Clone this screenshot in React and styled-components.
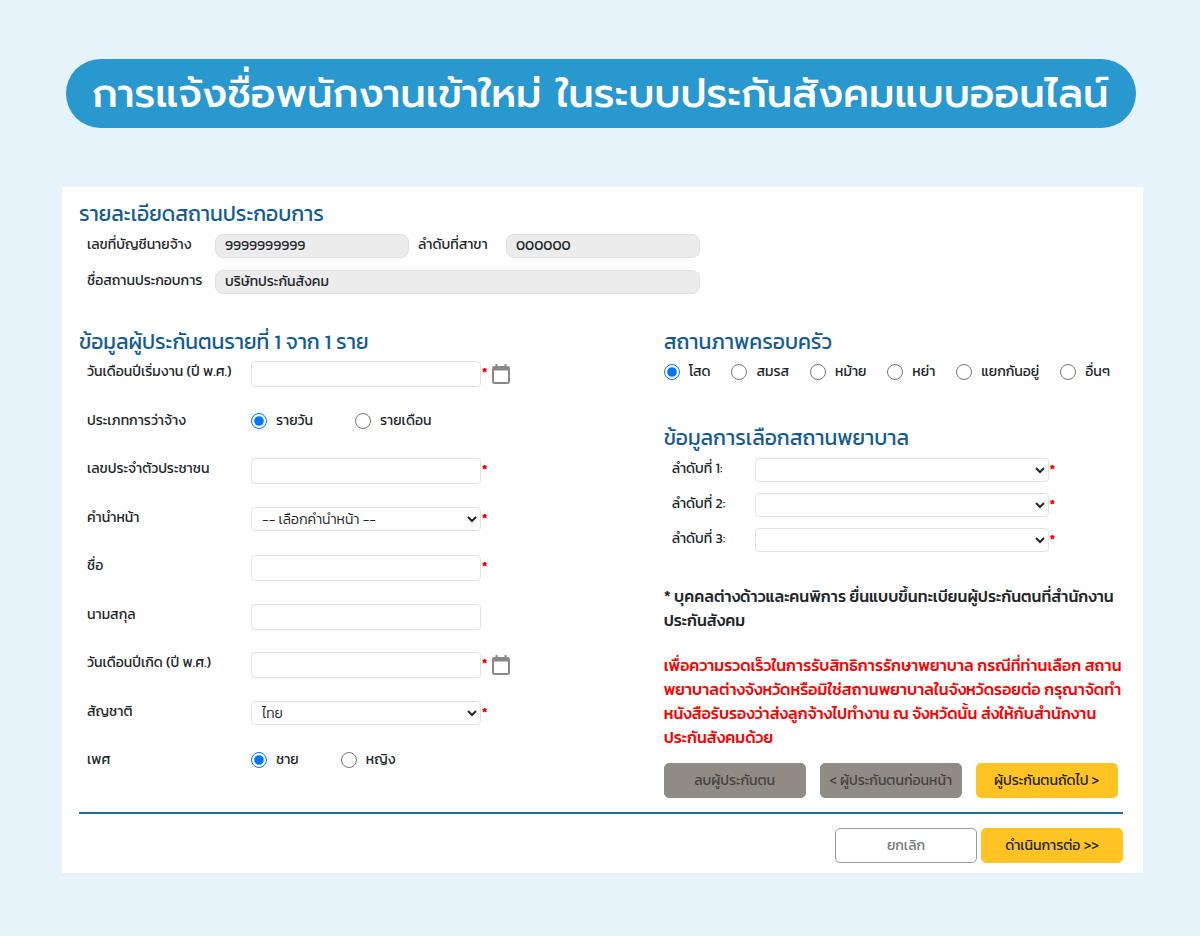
import { useState } from "react";
import styled, { createGlobalStyle } from "styled-components";

const GlobalStyle = createGlobalStyle`
* {
    box-sizing: border-box;
}
body {
    margin: 0;
    background: #e7f3fa;
    color: #212529;
    font-family: Kanit, Prompt, "Noto Sans Thai", "Noto Sans", sans-serif;
    font-size: 14px;
}
input, select, button {
    font: inherit;
    color: inherit;
}
`
const Page = styled.div`
padding: 59px 57px 63px 62px;
`
const Banner = styled.h1`
margin: 0 7px 59px 4px;
padding: 4px 26px 4px 24px;
border-radius: 35px;
background: #2998ce;
color: white;
font-family: Prompt, Kanit, "Noto Sans Thai", sans-serif;
font-size: 40px;
line-height: 61px;
font-weight: 500;
text-align: center;
white-space: nowrap;
`
const Card = styled.form`
padding: 12px 20px 10px 17px;
background: white;
`
const Title = styled.h2`
margin: 0;
color: #125a96;
font-size: 21px;
line-height: 30px;
font-weight: 400;
`
const Company = styled.section`
display: grid;
grid-template-columns: 119px 1fr 79px 1fr;
gap: 12px 9px;
align-items: start;
max-width: 621px;
padding: 5px 0 33px 8px;
`
const Label = styled.label`
line-height: 22px;
font-weight: 400;
white-space: nowrap;
`
const ReadOnly = styled.input`
width: 100%;
height: 24px;
padding: 0 9px 2px;
border: 1px solid #dfdfdf;
border-radius: 8px;
background: #ececec;
font-weight: 400;

&.wide {
    grid-column: 2 / -1;
}
`
const Columns = styled.div`
display: grid;
grid-template-columns: 56fr 44fr;
`
const Column = styled.section`
display: flex;
flex-direction: column;
`
const Fields = styled.div`
flex: 1;
display: flex;
flex-direction: column;
justify-content: space-between;
padding: 4px 0 23px 8px;
`
const Field = styled.div`
display: flex;
align-items: flex-start;
height: 26px;

& > :first-child {
    width: 164px;
}
`
const TextInput = styled.input`
width: 230px;
height: 26px;
padding: 0 8px;
border: 1px solid #e2e2e2;
border-radius: 4px;
background: white;
`
const Select = styled.select`
width: ${props => props.$wide ? "294px" : "230px"};
height: 24px;
padding: 0 6px;
border: 1px solid #e2e2e2;
border-radius: 4px;
background: white;
font-weight: 300;
`
const Star = styled.span`
padding: 0 1px;
color: red;
font-size: 12px;
line-height: 22px;
font-weight: 700;
`
const IconButton = styled.button`
display: flex;
padding: 3px 0;
margin-left: 4px;
border: 0;
background: none;
color: #888;
`
const Radios = styled.div`
display: flex;
align-items: center;
gap: ${props => props.$gap};
`
const RadioLabel = styled.label`
display: flex;
align-items: center;
gap: 9px;
line-height: 22px;
font-weight: 400;
white-space: nowrap;

input {
    width: 16px;
    height: 16px;
    margin: 0;
}
`
const Family = styled.div`
padding: 4px 13px 40px 0;

& > div {
    justify-content: space-between;
}
`
const Hospitals = styled.div`
display: flex;
flex-direction: column;
gap: 11px;
padding: 5px 0 32px 8px;
`
const HospitalRow = styled.div`
display: flex;
align-items: flex-start;

label {
    width: 83px;
}
`
const Note = styled.p`
margin: 0 0 ${props => props.$warn ? "14px" : "21px"};
line-height: 24px;
font-size: 16px;
font-weight: 500;
white-space: nowrap;
color: ${props => props.$warn ? "red" : "#212529"};
`
const Buttons = styled.div`
display: flex;
gap: ${props => props.$gap};
`
const FooterButtons = styled(Buttons)`
justify-content: flex-end;
`
const Button = styled.button`
width: 142px;
height: 35px;
padding: 0;
border: 1px solid ${props => props.$border || props.$bg};
border-radius: 5px;
background: ${props => props.$bg};
color: ${props => props.$color || "#212529"};
font-weight: 400;
white-space: nowrap;
`
const Divider = styled.hr`
height: 2px;
margin: 14px 0;
border: 0;
background: #236a97;
`

const statuses = ["โสด", "สมรส", "หม้าย", "หย่า", "แยกกันอยู่", "อื่นๆ"];

function Calendar () {
    return (
        <svg width="18" height="20" viewBox="0 0 18 20" fill="none" aria-hidden="true">
            <rect x="1" y="3" width="16" height="16" rx="1.5" stroke="currentColor" strokeWidth="2" />
            <path d="M1 3h16v3.5H1zM3.5 0h2v3h-2zM12.500 0h2v3h-2z" fill="currentColor" />
        </svg>
    )
}

function RadioGroup ({ name, label, options, gap }) {
    const [value, setValue] = useState(options[0]);

    return (
        <Radios role="radiogroup" aria-label={label} $gap={gap}>
            {options.map(option => (
                <RadioLabel key={option}>
                    <input type="radio" name={name} checked={value === option} onChange={() => setValue(option)} />
                    {option}
                </RadioLabel>
            ))}
        </Radios>
    )
}

function TextField ({ id, label, required, date }) {
    return (
        <Field>
            <Label htmlFor={id}>{label}</Label>
            <TextInput id={id} name={id} type="text" />
            {required && <Star>*</Star>}
            {date && <IconButton type="button" aria-label={label}><Calendar /></IconButton>}
        </Field>
    )
}

function SelectField ({ id, label, option }) {
    return (
        <Field>
            <Label htmlFor={id}>{label}</Label>
            <Select id={id} name={id}>
                <option>{option}</option>
            </Select>
            <Star>*</Star>
        </Field>
    )
}

export default function App () {
    return (
        <Page>
            <GlobalStyle />
            <Banner>การแจ้งชื่อพนักงานเข้าใหม่ ในระบบประกันสังคมแบบออนไลน์</Banner>
            <Card onSubmit={event => event.preventDefault()}>
                <Title>รายละเอียดสถานประกอบการ</Title>
                <Company>
                    <Label htmlFor="account">เลขที่บัญชีนายจ้าง</Label>
                    <ReadOnly id="account" value="9999999999" readOnly />
                    <Label htmlFor="branch">ลำดับที่สาขา</Label>
                    <ReadOnly id="branch" value="000000" readOnly />
                    <Label htmlFor="company">ชื่อสถานประกอบการ</Label>
                    <ReadOnly id="company" className="wide" value="บริษัทประกันสังคม" readOnly />
                </Company>
                <Columns>
                    <Column>
                        <Title>ข้อมูลผู้ประกันตนรายที่ 1 จาก 1 ราย</Title>
                        <Fields>
                            <TextField id="startDate" label="วันเดือนปีเริ่มงาน (ปี พ.ศ.)" required date />
                            <Field>
                                <Label as="span">ประเภทการว่าจ้าง</Label>
                                <RadioGroup name="hireType" label="ประเภทการว่าจ้าง" options={["รายวัน", "รายเดือน"]} gap="42px" />
                            </Field>
                            <TextField id="citizenId" label="เลขประจำตัวประชาชน" required />
                            <SelectField id="prefix" label="คำนำหน้า" option="-- เลือกคำนำหน้า --" />
                            <TextField id="firstName" label="ชื่อ" required />
                            <TextField id="lastName" label="นามสกุล" />
                            <TextField id="birthDate" label="วันเดือนปีเกิด (ปี พ.ศ.)" required date />
                            <SelectField id="nationality" label="สัญชาติ" option="ไทย" />
                            <Field>
                                <Label as="span">เพศ</Label>
                                <RadioGroup name="gender" label="เพศ" options={["ชาย", "หญิง"]} gap="42px" />
                            </Field>
                        </Fields>
                    </Column>
                    <Column>
                        <Title>สถานภาพครอบครัว</Title>
                        <Family>
                            <RadioGroup name="family" label="สถานภาพครอบครัว" options={statuses} gap="8px" />
                        </Family>
                        <Title>ข้อมูลการเลือกสถานพยาบาล</Title>
                        <Hospitals>
                            {[1, 2, 3].map(n => (
                                <HospitalRow key={n}>
                                    <Label htmlFor={`hospital${n}`}>ลำดับที่ {n}:</Label>
                                    <Select id={`hospital${n}`} $wide />
                                    <Star>*</Star>
                                </HospitalRow>
                            ))}
                        </Hospitals>
                        <Note>
                            * บุคคลต่างด้าวและคนพิการ ยื่นแบบขึ้นทะเบียนผู้ประกันตนที่สำนักงาน<br />
                            ประกันสังคม
                        </Note>
                        <Note $warn>
                            เพื่อความรวดเร็วในการรับสิทธิการรักษาพยาบาล กรณีที่ท่านเลือก สถาน<br />
                            พยาบาลต่างจังหวัดหรือมิใช่สถานพยาบาลในจังหวัดรอยต่อ กรุณาจัดทำ<br />
                            หนังสือรับรองว่าส่งลูกจ้างไปทำงาน ณ จังหวัดนั้น ส่งให้กับสำนักงาน<br />
                            ประกันสังคมด้วย
                        </Note>
                        <Buttons $gap="14px">
                            <Button type="button" $bg="#908c85" $color="#45433f">ลบผู้ประกันตน</Button>
                            <Button type="button" $bg="#908c85" $color="#45433f">&lt; ผู้ประกันตนก่อนหน้า</Button>
                            <Button type="button" $bg="#ffc324">ผู้ประกันตนถัดไป &gt;</Button>
                        </Buttons>
                    </Column>
                </Columns>
                <Divider />
                <FooterButtons $gap="4px">
                    <Button type="button" $bg="white" $border="#999" $color="#777">ยกเลิก</Button>
                    <Button type="submit" $bg="#ffc324">ดำเนินการต่อ &gt;&gt;</Button>
                </FooterButtons>
            </Card>
        </Page>
    )
}
